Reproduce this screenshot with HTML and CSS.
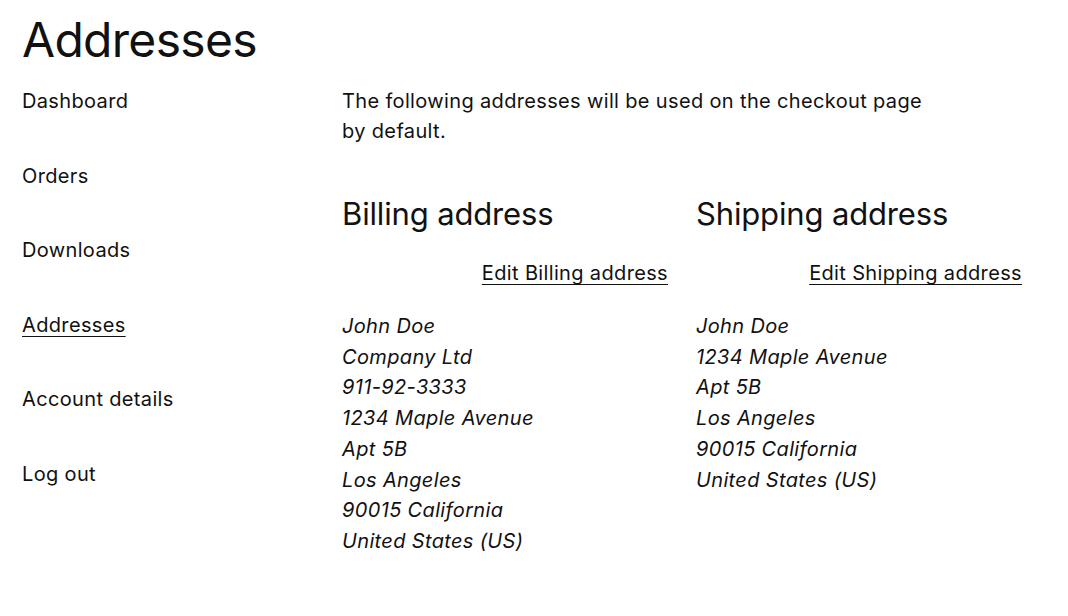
FILE: index.html
```html
<!DOCTYPE html>
<html>
<head>
<meta charset="utf-8">
<link rel="stylesheet" href="styles.css">
</head>
<body>
<h1 class="page-title">Addresses</h1>
<div class="account">
  <nav class="account-nav">
    <a href="#">Dashboard</a>
    <a href="#">Orders</a>
    <a href="#">Downloads</a>
    <a href="#" class="active">Addresses</a>
    <a href="#">Account details</a>
    <a href="#">Log out</a>
  </nav>
  <div class="account-content">
    <p class="intro">The following addresses will be used on the checkout page by default.</p>
    <div class="addresses">
      <section class="address">
        <h2>Billing address</h2>
        <div class="edit"><a href="#">Edit Billing address</a></div>
        <address>John Doe<br>Company Ltd<br>911-92-3333<br>1234 Maple Avenue<br>Apt 5B<br>Los Angeles<br>90015 California<br>United States (US)</address>
      </section>
      <section class="address">
        <h2>Shipping address</h2>
        <div class="edit"><a href="#">Edit Shipping address</a></div>
        <address>John Doe<br>1234 Maple Avenue<br>Apt 5B<br>Los Angeles<br>90015 California<br>United States (US)</address>
      </section>
    </div>
  </div>
</div>
</body>
</html>
```

FILE: styles.css
```css
* { box-sizing: border-box; }
body {
  margin: 0;
  padding: 0 22px;
  font-family: Inter, "Noto Sans", sans-serif;
  color: #111;
  background: #fff;
  font-size: 20px;
  line-height: 30px;
  letter-spacing: 0.35px;
}
.page-title {
  margin: 10px 0 0;
  font-size: 48px;
  font-weight: 400;
  line-height: 60px;
  letter-spacing: -0.7px;
}
.account {
  display: flex;
  margin-top: 16px;
}
.account-nav {
  width: 320px;
  flex: none;
  display: flex;
  flex-direction: column;
  gap: 44.6px;
}
.account-nav a {
  color: #111;
  text-decoration: none;
}
.account-nav a.active {
  text-decoration: underline;
  text-underline-offset: 4px;
  text-decoration-thickness: 1px;
}
.account-content {
  width: 680px;
}
.intro {
  margin: 0;
  max-width: 585px;
}
.addresses {
  display: grid;
  grid-template-columns: 326px 326px;
  column-gap: 28px;
  margin-top: 50px;
}
.address h2 {
  margin: 0;
  font-size: 31px;
  font-weight: 400;
  line-height: 36px;
  letter-spacing: -0.15px;
}
.edit {
  text-align: right;
  margin-top: 26px;
}
.edit a {
  color: #111;
  text-decoration: underline;
  text-underline-offset: 4px;
  text-decoration-thickness: 1px;
}
address {
  margin-top: 23px;
  font-style: italic;
  line-height: 30.7px;
}
```
